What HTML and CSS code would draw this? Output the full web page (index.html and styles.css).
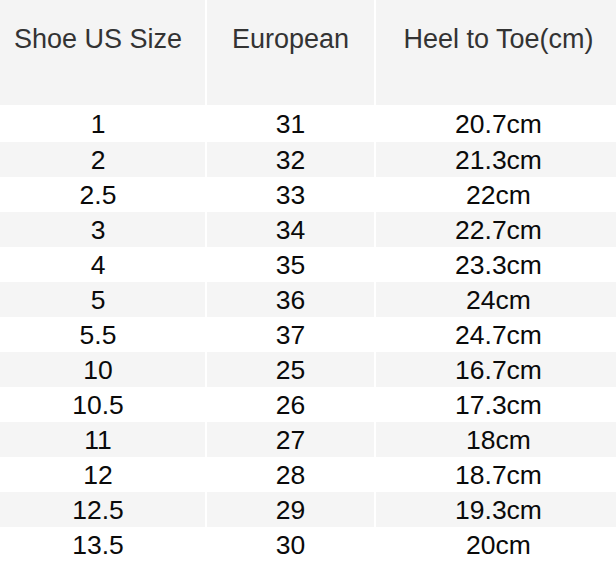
FILE: index.html
```html
<!DOCTYPE html>
<html>
<head>
<meta charset="utf-8">
<link rel="stylesheet" href="styles.css">
</head>
<body>
<div class="chart">
  <div class="row head">
    <div class="cell">Shoe US Size</div>
    <div class="cell">European</div>
    <div class="cell">Heel to Toe(cm)</div>
  </div>
  <div class="row first"><div class="cell">1</div><div class="cell">31</div><div class="cell">20.7cm</div></div>
  <div class="row alt"><div class="cell">2</div><div class="cell">32</div><div class="cell">21.3cm</div></div>
  <div class="row"><div class="cell">2.5</div><div class="cell">33</div><div class="cell">22cm</div></div>
  <div class="row alt"><div class="cell">3</div><div class="cell">34</div><div class="cell">22.7cm</div></div>
  <div class="row"><div class="cell">4</div><div class="cell">35</div><div class="cell">23.3cm</div></div>
  <div class="row alt"><div class="cell">5</div><div class="cell">36</div><div class="cell">24cm</div></div>
  <div class="row"><div class="cell">5.5</div><div class="cell">37</div><div class="cell">24.7cm</div></div>
  <div class="row alt"><div class="cell">10</div><div class="cell">25</div><div class="cell">16.7cm</div></div>
  <div class="row"><div class="cell">10.5</div><div class="cell">26</div><div class="cell">17.3cm</div></div>
  <div class="row alt"><div class="cell">11</div><div class="cell">27</div><div class="cell">18cm</div></div>
  <div class="row"><div class="cell">12</div><div class="cell">28</div><div class="cell">18.7cm</div></div>
  <div class="row alt"><div class="cell">12.5</div><div class="cell">29</div><div class="cell">19.3cm</div></div>
  <div class="row"><div class="cell">13.5</div><div class="cell">30</div><div class="cell">20cm</div></div>
</div>
</body>
</html>
```

FILE: styles.css
```css
html, body {
  margin: 0;
  padding: 0;
  background: #ffffff;
}
body {
  font-family: "Liberation Sans", Arial, sans-serif;
  width: 616px;
  height: 568px;
  overflow: hidden;
}
.chart {
  display: flex;
  flex-direction: column;
}
.row {
  display: grid;
  grid-template-columns: 205px 167px 1fr;
  column-gap: 2px;
  height: 35px;
  background: #ffffff;
}
.row.first {
  height: 37px;
}
.cell {
  display: flex;
  align-items: center;
  justify-content: center;
  font-size: 26.5px;
  color: #0a0a0a;
  padding-top: 1px;
}
.cell:first-child {
  padding-right: 9px;
}
.cell:last-child {
  padding-left: 5px;
}
.row.alt .cell {
  background: #f5f5f5;
}
.row.head {
  height: 105px;
}
.row.head .cell {
  background: #f4f4f4;
  color: #333333;
  align-items: flex-start;
  padding-top: 24px;
  font-size: 27px;
}
```
